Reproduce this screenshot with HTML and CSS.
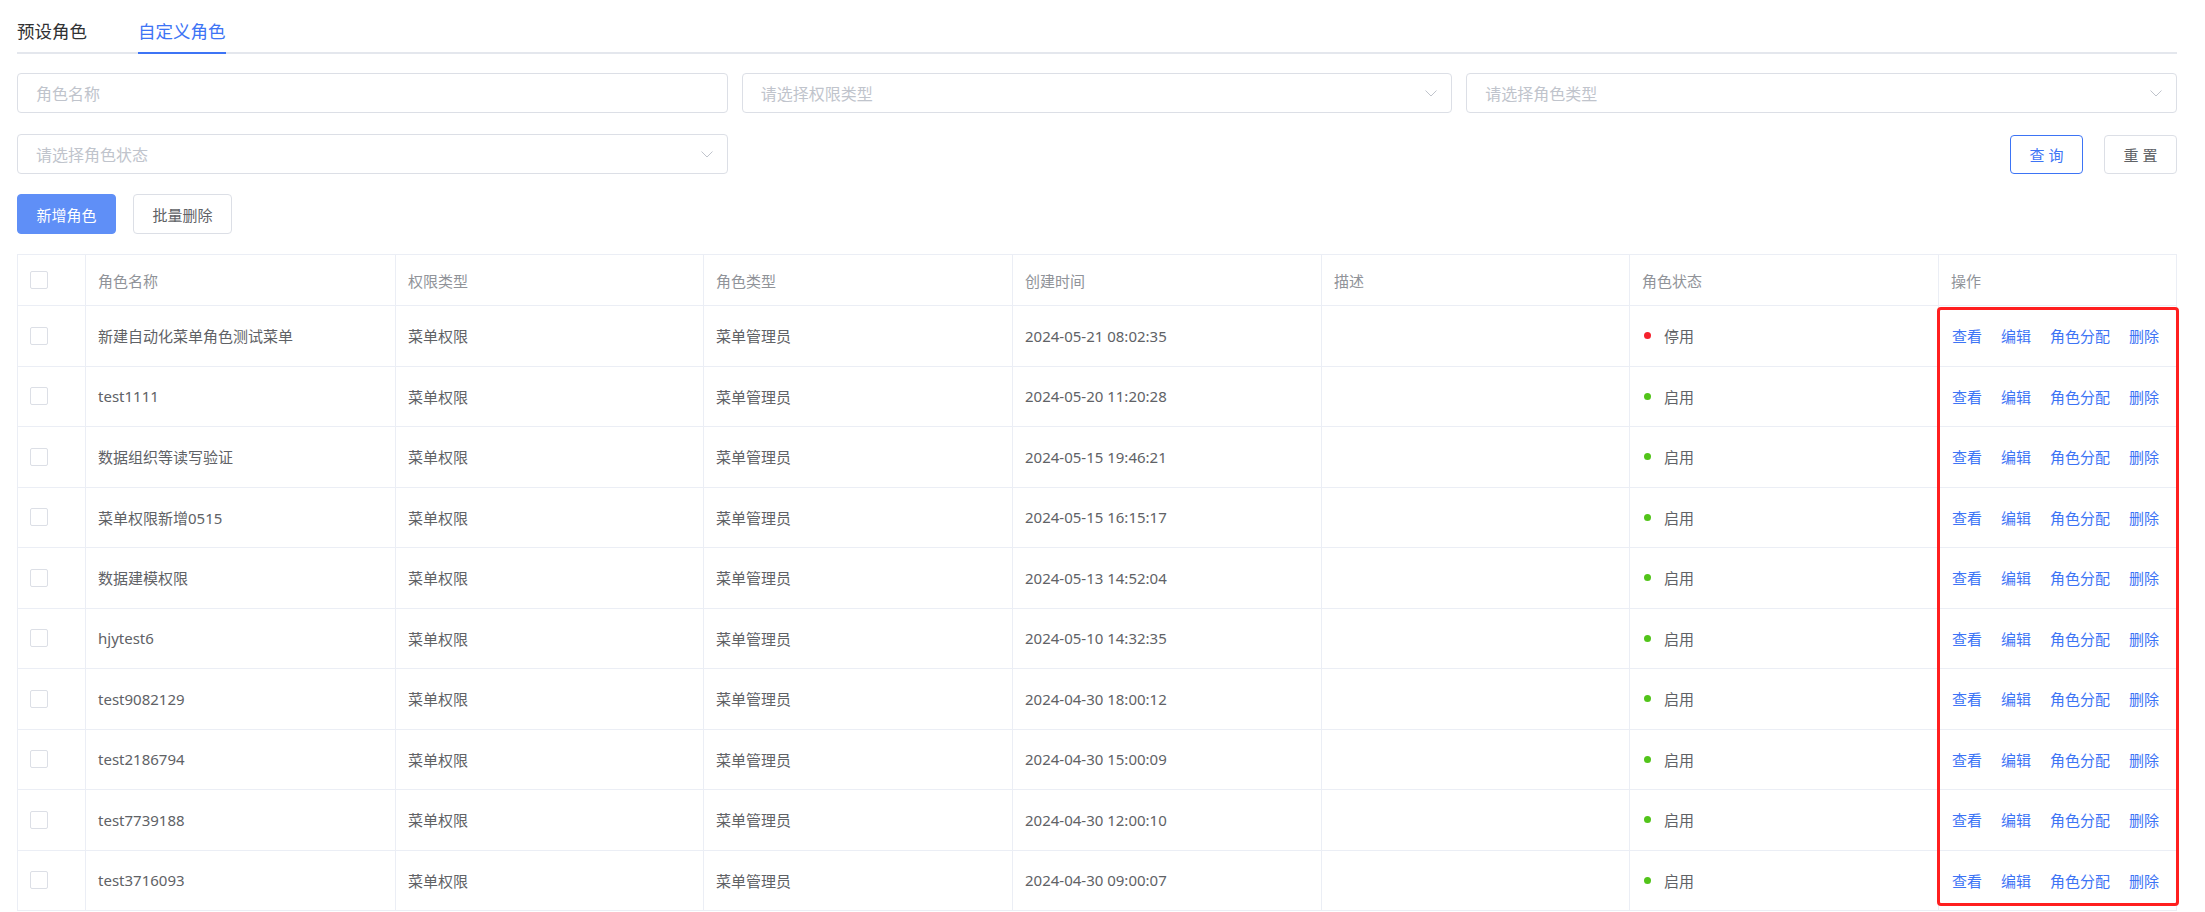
FILE: index.html
```html
<!DOCTYPE html>
<html lang="zh-CN">
<head>
<meta charset="utf-8">
<title>角色管理</title>
<link rel="stylesheet" href="styles.css">
</head>
<body>
<div class="page">
  <div class="tabs">
    <div class="tab">预设角色</div>
    <div class="tab active">自定义角色</div>
  </div>

  <div class="filters">
    <div class="field"><span class="ph">角色名称</span></div>
    <div class="field select"><span class="ph">请选择权限类型</span><svg class="chev" width="12" height="7" viewBox="0 0 12 7"><polyline points="0.5,0.5 6,6 11.5,0.5" fill="none" stroke="#c0c4cc" stroke-width="1"/></svg></div>
    <div class="field select"><span class="ph">请选择角色类型</span><svg class="chev" width="12" height="7" viewBox="0 0 12 7"><polyline points="0.5,0.5 6,6 11.5,0.5" fill="none" stroke="#c0c4cc" stroke-width="1"/></svg></div>
    <div class="field select"><span class="ph">请选择角色状态</span><svg class="chev" width="12" height="7" viewBox="0 0 12 7"><polyline points="0.5,0.5 6,6 11.5,0.5" fill="none" stroke="#c0c4cc" stroke-width="1"/></svg></div>
    <div></div>
    <div class="search-btns">
      <button class="btn btn-query">查 询</button>
      <button class="btn btn-reset">重 置</button>
    </div>
  </div>

  <div class="actions">
    <button class="btn btn-primary">新增角色</button>
    <button class="btn btn-default">批量删除</button>
  </div>

  <div class="table">
    <div class="row head">
      <div class="cell chk"><span class="checkbox"></span></div>
      <div class="cell">角色名称</div>
      <div class="cell">权限类型</div>
      <div class="cell">角色类型</div>
      <div class="cell">创建时间</div>
      <div class="cell">描述</div>
      <div class="cell">角色状态</div>
      <div class="cell">操作</div>
    </div>
    <div class="body">
      <div class="row">
        <div class="cell chk"><span class="checkbox"></span></div>
        <div class="cell">新建自动化菜单角色测试菜单</div>
        <div class="cell">菜单权限</div>
        <div class="cell">菜单管理员</div>
        <div class="cell">2024-05-21 08:02:35</div>
        <div class="cell"></div>
        <div class="cell"><span class="dot off"></span>停用</div>
        <div class="cell ops"><a>查看</a><a>编辑</a><a>角色分配</a><a>删除</a></div>
      </div>
      <div class="row">
        <div class="cell chk"><span class="checkbox"></span></div>
        <div class="cell">test1111</div>
        <div class="cell">菜单权限</div>
        <div class="cell">菜单管理员</div>
        <div class="cell">2024-05-20 11:20:28</div>
        <div class="cell"></div>
        <div class="cell"><span class="dot on"></span>启用</div>
        <div class="cell ops"><a>查看</a><a>编辑</a><a>角色分配</a><a>删除</a></div>
      </div>
      <div class="row">
        <div class="cell chk"><span class="checkbox"></span></div>
        <div class="cell">数据组织等读写验证</div>
        <div class="cell">菜单权限</div>
        <div class="cell">菜单管理员</div>
        <div class="cell">2024-05-15 19:46:21</div>
        <div class="cell"></div>
        <div class="cell"><span class="dot on"></span>启用</div>
        <div class="cell ops"><a>查看</a><a>编辑</a><a>角色分配</a><a>删除</a></div>
      </div>
      <div class="row">
        <div class="cell chk"><span class="checkbox"></span></div>
        <div class="cell">菜单权限新增0515</div>
        <div class="cell">菜单权限</div>
        <div class="cell">菜单管理员</div>
        <div class="cell">2024-05-15 16:15:17</div>
        <div class="cell"></div>
        <div class="cell"><span class="dot on"></span>启用</div>
        <div class="cell ops"><a>查看</a><a>编辑</a><a>角色分配</a><a>删除</a></div>
      </div>
      <div class="row">
        <div class="cell chk"><span class="checkbox"></span></div>
        <div class="cell">数据建模权限</div>
        <div class="cell">菜单权限</div>
        <div class="cell">菜单管理员</div>
        <div class="cell">2024-05-13 14:52:04</div>
        <div class="cell"></div>
        <div class="cell"><span class="dot on"></span>启用</div>
        <div class="cell ops"><a>查看</a><a>编辑</a><a>角色分配</a><a>删除</a></div>
      </div>
      <div class="row">
        <div class="cell chk"><span class="checkbox"></span></div>
        <div class="cell">hjytest6</div>
        <div class="cell">菜单权限</div>
        <div class="cell">菜单管理员</div>
        <div class="cell">2024-05-10 14:32:35</div>
        <div class="cell"></div>
        <div class="cell"><span class="dot on"></span>启用</div>
        <div class="cell ops"><a>查看</a><a>编辑</a><a>角色分配</a><a>删除</a></div>
      </div>
      <div class="row">
        <div class="cell chk"><span class="checkbox"></span></div>
        <div class="cell">test9082129</div>
        <div class="cell">菜单权限</div>
        <div class="cell">菜单管理员</div>
        <div class="cell">2024-04-30 18:00:12</div>
        <div class="cell"></div>
        <div class="cell"><span class="dot on"></span>启用</div>
        <div class="cell ops"><a>查看</a><a>编辑</a><a>角色分配</a><a>删除</a></div>
      </div>
      <div class="row">
        <div class="cell chk"><span class="checkbox"></span></div>
        <div class="cell">test2186794</div>
        <div class="cell">菜单权限</div>
        <div class="cell">菜单管理员</div>
        <div class="cell">2024-04-30 15:00:09</div>
        <div class="cell"></div>
        <div class="cell"><span class="dot on"></span>启用</div>
        <div class="cell ops"><a>查看</a><a>编辑</a><a>角色分配</a><a>删除</a></div>
      </div>
      <div class="row">
        <div class="cell chk"><span class="checkbox"></span></div>
        <div class="cell">test7739188</div>
        <div class="cell">菜单权限</div>
        <div class="cell">菜单管理员</div>
        <div class="cell">2024-04-30 12:00:10</div>
        <div class="cell"></div>
        <div class="cell"><span class="dot on"></span>启用</div>
        <div class="cell ops"><a>查看</a><a>编辑</a><a>角色分配</a><a>删除</a></div>
      </div>
      <div class="row">
        <div class="cell chk"><span class="checkbox"></span></div>
        <div class="cell">test3716093</div>
        <div class="cell">菜单权限</div>
        <div class="cell">菜单管理员</div>
        <div class="cell">2024-04-30 09:00:07</div>
        <div class="cell"></div>
        <div class="cell"><span class="dot on"></span>启用</div>
        <div class="cell ops"><a>查看</a><a>编辑</a><a>角色分配</a><a>删除</a></div>
      </div>
      <div class="highlight"></div>
    </div>
  </div>
</div>
</body>
</html>
```
FILE: styles.css
```css
* { box-sizing: border-box; }
html, body { margin: 0; background: #fff; }
body {
  font-family: "Noto Sans", "Noto Sans CJK SC", "Liberation Sans", sans-serif;
  color: #606266;
  overflow: hidden;
}
.page {
  width: 2205px;
  padding: 0 28px 0 17px;
}

/* tabs */
.tabs {
  display: flex;
  gap: 51px;
  border-bottom: 2px solid #e4e7ed;
}
.tab {
  position: relative;
  font-size: 17.5px;
  line-height: 24px;
  padding: 19px 0 9px;
  color: #303133;
}
.tab.active { color: #3d74f5; }
.tab.active::after {
  content: "";
  position: absolute;
  left: 0; right: 0; bottom: -2px;
  height: 2.5px;
  background: #3d74f5;
}

/* filters */
.filters {
  margin-top: 19px;
  display: grid;
  grid-template-columns: 1fr 1fr 1fr;
  column-gap: 14px;
  row-gap: 21px;
}
.field {
  height: 40px;
  border: 1px solid #dcdfe6;
  border-radius: 4px;
  display: flex;
  align-items: center;
  padding: 0 14px 0 18px;
}
.ph {
  flex: 1;
  font-size: 16px;
  color: #c0c4cc;
}
.chev { flex: none; }
.search-btns {
  display: flex;
  justify-content: flex-end;
  align-items: center;
  gap: 21px;
}
.btn {
  font-family: inherit;
  font-size: 15px;
  background: #fff;
  border: 1px solid #dcdfe6;
  border-radius: 4px;
  cursor: pointer;
  padding: 0;
}
.btn-query, .btn-reset { width: 73px; height: 39px; }
.btn-query { border-color: #3d74f5; color: #3d74f5; }
.btn-reset { color: #606266; }

.actions {
  margin-top: 20px;
  display: flex;
  gap: 17px;
}
.actions .btn { width: 99px; height: 40px; }
.btn-primary { background: #5f8ff7; border-color: #5f8ff7; color: #fff; }
.btn-default { color: #606266; }

/* table */
.table {
  margin-top: 20px;
  border: 1px solid #ebeef5;
  border-bottom: none;
  font-size: 15px;
}
.row {
  display: grid;
  grid-template-columns: 68px 310px 308px 309px 309px 308px 309px 1fr;
  height: 60.5px;
  border-bottom: 1px solid #ebeef5;
}
.row.head { height: 51px; color: #909399; }
.cell {
  display: flex;
  align-items: center;
  padding: 0 13px 0 12px;
  border-right: 1px solid #ebeef5;
  white-space: nowrap;
  overflow: hidden;
}
.cell:last-child { border-right: none; }
.cell.chk { padding-left: 12px; }
.checkbox {
  width: 18px; height: 18px;
  border: 1px solid #dcdfe6;
  border-radius: 2px;
  background: #fff;
}
.dot {
  width: 7px; height: 7px;
  border-radius: 50%;
  margin: 0 13px 0 2px;
}
.dot.on { background: #52c41a; }
.dot.off { background: #f5222d; }
.ops { gap: 19px; padding-left: 13px; }
.ops a { color: #3d74f5; cursor: pointer; }

.body { position: relative; }
.highlight {
  position: absolute;
  top: 1px;
  bottom: 5px;
  right: -3px;
  width: 242px;
  border: 3.5px solid #ff1f1f;
  border-radius: 4px;
  pointer-events: none;
}
```
